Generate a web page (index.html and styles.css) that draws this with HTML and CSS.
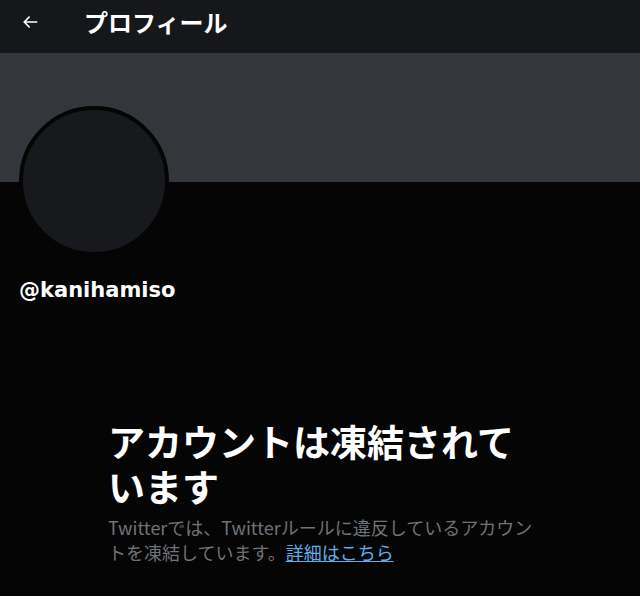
FILE: index.html
```html
<!DOCTYPE html>
<html lang="ja">
<head>
    <meta charset="UTF-8">
    <meta name="viewport" content="width=device-width, initial-scale=1.0">
    <title>プロフィール</title>
    <link rel="stylesheet" href="styles.css">
</head>
<body>
    <!-- Top bar -->
    <header class="top-bar">
        <span class="back-button">
            <svg viewBox="0 0 24 24" width="20" height="20"><path d="M20 11H7.414l4.293-4.293a1 1 0 0 0-1.414-1.414l-6 6a1 1 0 0 0 0 1.414l6 6a1 1 0 0 0 1.414-1.414L7.414 13H20a1 1 0 0 0 0-2z" fill="#fff"/></svg>
        </span>
        <h1 class="page-title">プロフィール</h1>
    </header>

    <div class="profile">
        <div class="banner"></div>
        <div class="avatar"></div>
        <div class="username">@kanihamiso</div>
    </div>

    <!-- Suspended message -->
    <div class="suspended">
        <h2>アカウントは凍結されています</h2>
        <p>Twitterでは、Twitterルールに違反しているアカウン<br>トを凍結しています。<a href="#" class="link">詳細はこちら</a></p>
    </div>
</body>
</html>
```

FILE: styles.css
```css
body {
    background-color: #050505;
    color: #fff;
    font-family: "Open Sans", "Noto Sans CJK JP", sans-serif;
    margin: 0;
    padding: 0;
}

.top-bar {
    display: flex;
    align-items: center;
    height: 44px;
    padding: 0 20px 9px;
    background-color: #15171a;
}

.back-button {
    display: flex;
    width: 20px;
    margin-right: 44px;
}

.page-title {
    margin: 0 0 2px;
    font-size: 24px;
    font-weight: 700;
    font-family: "Noto Sans CJK JP", sans-serif;
}

.banner {
    height: 129px;
    background-color: #33363a;
}

.avatar {
    width: 142px;
    height: 142px;
    margin: -76px 0 0 19px;
    border-radius: 50%;
    border: 4px solid #050505;
    background-color: #18191c;
}

.username {
    margin: 22px 0 0 19px;
    font-family: "DejaVu Sans", sans-serif;
    font-size: 21px;
    font-weight: 700;
}

.suspended {
    width: 425px;
    padding: 117px 0 0 108px;
    font-family: "Noto Sans CJK JP", sans-serif;
}

.suspended h2 {
    margin: 0;
    font-size: 37px;
    line-height: 45px;
    font-weight: 700;
}

.suspended p {
    width: 450px;
    margin: 6px 0 0;
    font-size: 18px;
    line-height: 25px;
    color: #6e7378;
}

.link {
    color: #5aaeea;
    text-decoration: underline;
}
```
